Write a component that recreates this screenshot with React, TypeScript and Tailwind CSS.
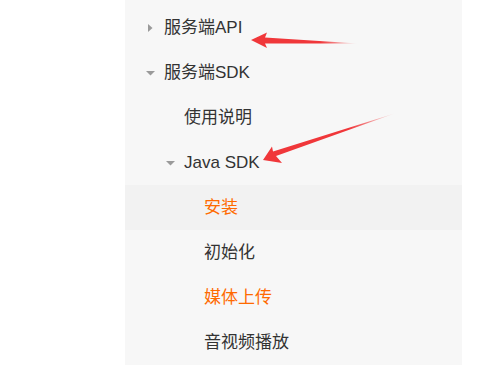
import React from "react";

type Item = { label: string; level: number; icon?: "right" | "down"; active?: boolean; orange?: boolean };

const items: Item[] = [
  { label: "服务端API", level: 1, icon: "right" },
  { label: "服务端SDK", level: 1, icon: "down" },
  { label: "使用说明", level: 2 },
  { label: "Java SDK", level: 2, icon: "down" },
  { label: "安装", level: 3, active: true, orange: true },
  { label: "初始化", level: 3 },
  { label: "媒体上传", level: 3, orange: true },
  { label: "音视频播放", level: 3 },
];

function Caret({ dir }: { dir: "right" | "down" }) {
  if (dir === "right") {
    return (
      <svg width="10" height="10" viewBox="0 0 10 10" className="block">
        <polygon points="2,1 6.5,5 2,9" fill="#9a9a9a" />
      </svg>
    );
  }
  return (
    <svg width="10" height="10" viewBox="0 0 10 10" className="block">
      <polygon points="0,3 9,3 4.5,7.5" fill="#9a9a9a" />
    </svg>
  );
}

export default function App() {
  return (
    <div
      className="relative w-[490px] h-[365px] bg-white overflow-hidden"
      style={{ fontFamily: '"Liberation Sans", "Noto Sans CJK SC", sans-serif' }}
    >
      <div className="ml-[125px] w-[337px] h-[365px] bg-[#f7f7f7] pt-[5px]">
        {items.map((it, i) => (
          <div
            key={i}
            className={`flex items-center h-[45px] text-[17px] ${it.active ? "bg-[#f2f2f2]" : ""}`}
            style={{ paddingLeft: 21 + (it.level - 1) * 20 }}
          >
            <div className="w-[18px] flex items-center">{it.icon && <Caret dir={it.icon} />}</div>
            <span className={it.orange ? "text-[#ff6a00]" : "text-[#333333]"}>{it.label}</span>
          </div>
        ))}
      </div>
      <svg className="absolute left-0 top-0 pointer-events-none" width="490" height="365" viewBox="0 0 490 365">
        <defs>
          <linearGradient id="g1" x1="251" y1="40" x2="358" y2="44" gradientUnits="userSpaceOnUse">
            <stop offset="0" stopColor="#f0373a" />
            <stop offset="0.65" stopColor="#f0373a" />
            <stop offset="1" stopColor="#f0373a" stopOpacity="0" />
          </linearGradient>
          <linearGradient id="g2" x1="263" y1="160" x2="396" y2="113" gradientUnits="userSpaceOnUse">
            <stop offset="0" stopColor="#f0373a" />
            <stop offset="0.65" stopColor="#f0373a" />
            <stop offset="1" stopColor="#f0373a" stopOpacity="0" />
          </linearGradient>
        </defs>
        <polygon points="251,40 267,32.5 265,37.5 358,43.5 265,43.5 267,48" fill="url(#g1)" />
        <polygon points="263,160 272,146.5 273,151.5 396,113 276,156 282,163" fill="url(#g2)" />
      </svg>
    </div>
  );
}
